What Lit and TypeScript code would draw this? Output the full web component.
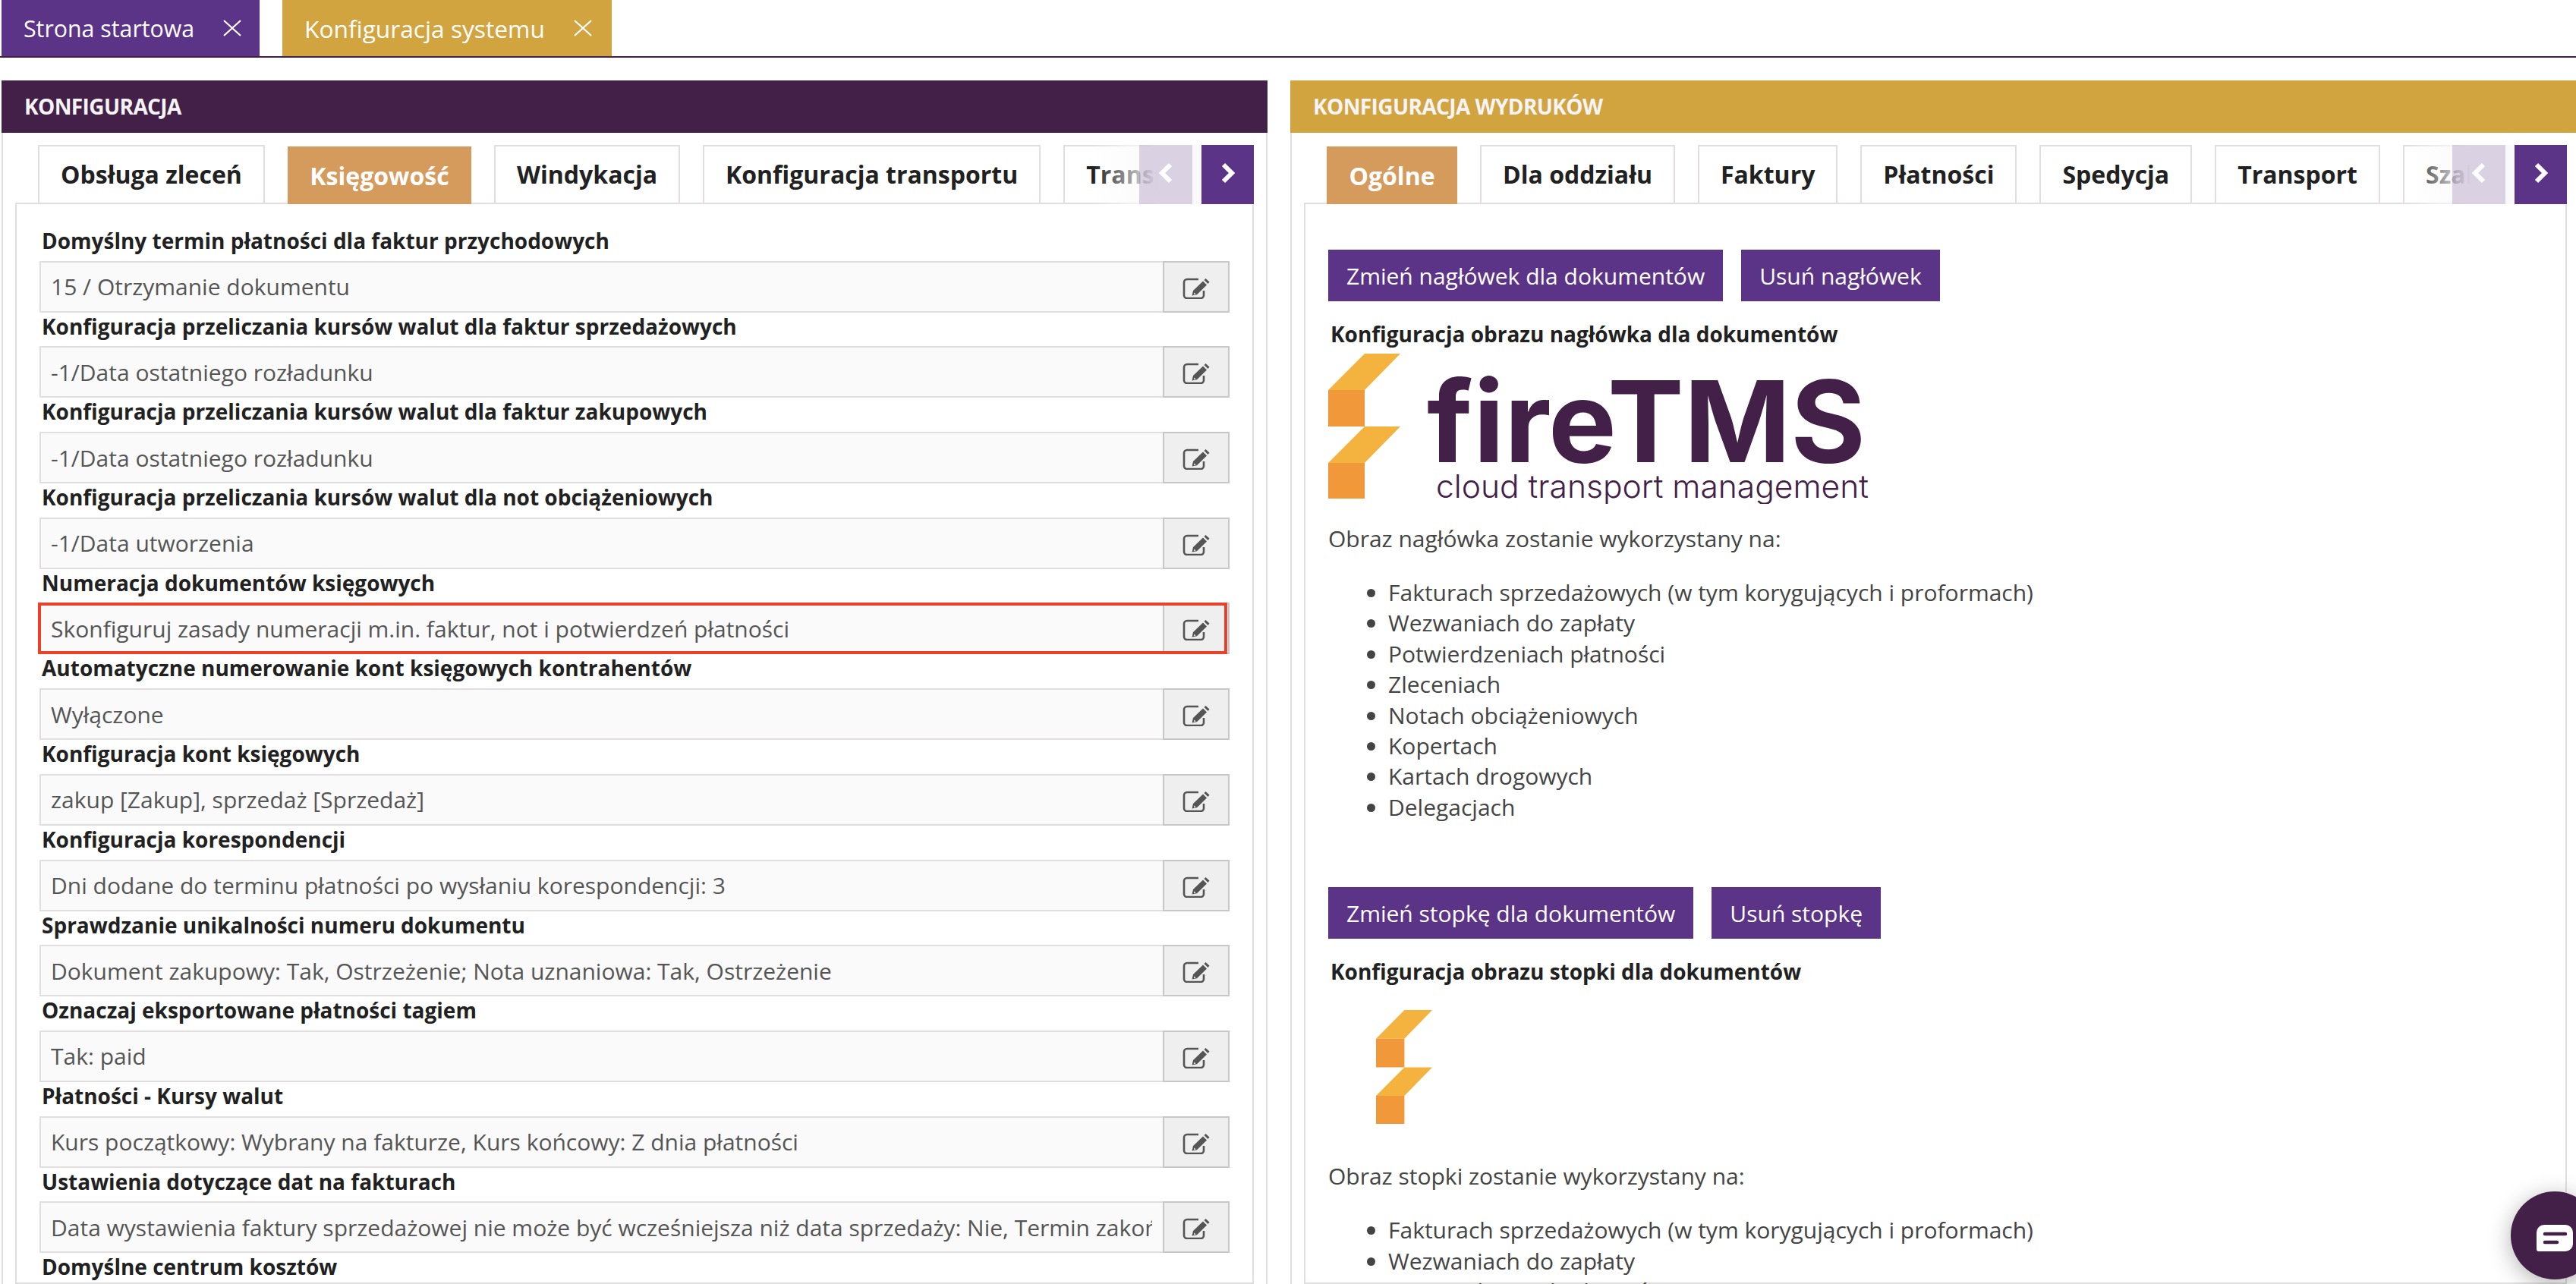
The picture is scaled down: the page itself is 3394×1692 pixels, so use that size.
import { LitElement, html, css, svg } from 'lit';
import { customElement } from 'lit/decorators.js';

const rows = [
  { label: 'Domyślny termin płatności dla faktur przychodowych', value: '15 / Otrzymanie dokumentu' },
  { label: 'Konfiguracja przeliczania kursów walut dla faktur sprzedażowych', value: '-1/Data ostatniego rozładunku' },
  { label: 'Konfiguracja przeliczania kursów walut dla faktur zakupowych', value: '-1/Data ostatniego rozładunku' },
  { label: 'Konfiguracja przeliczania kursów walut dla not obciążeniowych', value: '-1/Data utworzenia' },
  { label: 'Numeracja dokumentów księgowych', value: 'Skonfiguruj zasady numeracji m.in. faktur, not i potwierdzeń płatności', marked: true },
  { label: 'Automatyczne numerowanie kont księgowych kontrahentów', value: 'Wyłączone' },
  { label: 'Konfiguracja kont księgowych', value: 'zakup [Zakup], sprzedaż [Sprzedaż]' },
  { label: 'Konfiguracja korespondencji', value: 'Dni dodane do terminu płatności po wysłaniu korespondencji: 3' },
  { label: 'Sprawdzanie unikalności numeru dokumentu', value: 'Dokument zakupowy: Tak, Ostrzeżenie; Nota uznaniowa: Tak, Ostrzeżenie' },
  { label: 'Oznaczaj eksportowane płatności tagiem', value: 'Tak: paid' },
  { label: 'Płatności - Kursy walut', value: 'Kurs początkowy: Wybrany na fakturze, Kurs końcowy: Z dnia płatności' },
  { label: 'Ustawienia dotyczące dat na fakturach', value: 'Data wystawienia faktury sprzedażowej nie może być wcześniejsza niż data sprzedaży: Nie, Termin zakończenia usługi: Tak' },
  { label: 'Domyślne centrum kosztów', value: '' },
];

const headerUses = [
  'Fakturach sprzedażowych (w tym korygujących i proformach)',
  'Wezwaniach do zapłaty',
  'Potwierdzeniach płatności',
  'Zleceniach',
  'Notach obciążeniowych',
  'Kopertach',
  'Kartach drogowych',
  'Delegacjach',
];

const closeIcon = html`<svg class="close" viewBox="0 0 24 22"><path d="M1 1 23 21M23 1 1 21" fill="none" stroke="currentColor" stroke-width="2.2" /></svg>`;

const editIcon = html`<svg class="edit" viewBox="0 0 36 28">
  <path d="M21 2H6a4 4 0 0 0-4 4v17a4 4 0 0 0 4 4h18a4 4 0 0 0 4-4v-6" fill="none" stroke="#555" stroke-width="2.6" />
  <path d="M12.500 23.500 14 17 27 4.500 32 9.500 19 22.200Z" fill="#555" />
  <path d="M28.500 3 30.500 1 35.500 5.500 33.500 8Z" fill="#555" />
  <path d="M14.800 22.200 15.500 19.500 17.500 21.500Z" fill="#efefef" />
</svg>`;

// the orange mark of the logo, drawn in a 95x191 box
const mark = svg`
  <path d="M48 0H95L48 48H0Z M48 96H95L48 144H0Z" fill="#f4b33f" />
  <path d="M0 48H48V96H0Z M0 144H48V191H0Z" fill="#f1983b" />
`;

@customElement('app-root')
export class AppRoot extends LitElement {
  static styles = css`
    :host {
      display: block;
      position: relative;
      height: 1692px;
      overflow: hidden;
      background: #fff;
      font-family: 'Open Sans', sans-serif;
      color: #212121;
    }
    .top {
      display: flex;
      gap: 30px;
      height: 74px;
      padding-left: 2px;
      border-bottom: 2px solid #432047;
    }
    .top-tab {
      display: flex;
      align-items: center;
      gap: 38px;
      padding: 0 24px 0 29px;
      color: #fff;
      font-size: 30.300px;
    }
    .top-tab.gold { font-size: 31.700px; padding-right: 26px; }
    .purple { background: #5c3487; }
    .gold { background: #d1a43f; }
    .close { width: 24px; height: 22px; }

    .panels {
      display: flex;
      gap: 30px;
      padding: 30px 0 0 2px;
      height: 1586px;
    }
    .panel {
      display: flex;
      flex-direction: column;
      min-width: 0;
    }
    .left { width: 1668px; flex: none; }
    .right { flex: 1; }
    .head {
      height: 69px;
      line-height: 69px;
      padding-left: 30px;
      font-size: 28px;
      font-weight: 700;
      letter-spacing: -0.6px;
      color: #f6f4f6;
    }
    .dark { background: #432047; }
    .frame {
      flex: 1;
      display: flex;
      flex-direction: column;
      padding: 16px 16px 0 16px;
      border-left: 2px solid #e2dee0;
      min-height: 0;
    }
    .left .frame { border-right: 2px solid #e2dee0; }
    .right .frame { padding-right: 12px; }

    .strip {
      position: relative;
      z-index: 1;
      display: flex;
      gap: 30px;
      height: 78px;
      flex: none;
      padding-left: 30px;
      overflow: hidden;
    }
    .sub {
      flex: none;
      box-sizing: border-box;
      display: flex;
      align-items: center;
      height: 78px;
      padding: 0 28px 2px;
      background: #fff;
      border: 2px solid #e2dee0;
      font-size: 32px;
      font-weight: 700;
      white-space: nowrap;
    }
    .sub.on {
      height: 76px;
      margin-top: 2px;
      padding: 0 29.500px;
      border: 0;
      background: #d59b5d;
      color: #fff;
    }
    .fade {
      position: absolute;
      top: 0;
      right: 0;
      bottom: 0;
      width: 212px;
      background: linear-gradient(to right, rgba(250, 250, 250, 0), #fafafa 85px);
    }
    .nav {
      position: absolute;
      top: 0;
      right: 0;
      bottom: 0;
      display: flex;
      gap: 12px;
    }
    .nav div {
      width: 70px;
      display: flex;
      align-items: center;
      justify-content: center;
      padding-bottom: 4px;
      box-sizing: border-box;
    }
    .nav .prev { background: rgba(92, 52, 135, 0.2); }
    .nav .next { background: #5c3487; width: 69px; }
    .nav svg { width: 18px; height: 28px; }

    .pane {
      flex: 1;
      margin-top: -2px;
      border: 2px solid #e2dee0;
      min-height: 0;
    }
    .form { padding: 30px 30px 0; }
    .field-label {
      height: 44.700px;
      line-height: 36px;
      padding-left: 3px;
      font-size: 28px;
      font-weight: 700;
      white-space: nowrap;
    }
    .field {
      position: relative;
      display: flex;
      height: 68px;
      box-sizing: border-box;
    }
    .val {
      flex: 1;
      min-width: 0;
      box-sizing: border-box;
      display: flex;
      align-items: center;
      padding: 0 14px 0 13px;
      background: #fafafa;
      border: 2px solid #e2dee0;
      border-right: 0;
      font-size: 30px;
      color: #555;
    }
    .val span { overflow: hidden; white-space: nowrap; }
    .btn {
      flex: none;
      width: 88px;
      box-sizing: border-box;
      display: flex;
      align-items: center;
      justify-content: center;
      padding-top: 4px;
      background: #efefef;
      border: 2px solid #c8c6c6;
    }
    .edit { width: 36px; height: 28px; }
    .field.marked::after {
      content: '';
      position: absolute;
      top: 0;
      bottom: 0;
      left: -2px;
      right: 3px;
      border: 4px solid #e8432a;
    }

    .print { padding: 60px 30px 0; }
    .actions { display: flex; gap: 24px; }
    .action {
      display: flex;
      align-items: center;
      height: 68px;
      padding: 0 24px;
      background: #5c3487;
      color: #fff;
      font-size: 30px;
      white-space: nowrap;
    }
    .title {
      margin-top: 21px;
      padding-left: 3px;
      line-height: 44px;
      font-size: 28px;
      font-weight: 700;
    }
    .logo { display: block; margin-top: 2px; width: 720px; height: 200px; }
    .logo-small { display: block; margin: 29px 0 0 63px; width: 74px; height: 150px; }
    .logo-name { font-family: Inter, sans-serif; font-weight: 700; font-size: 149px; fill: #432047; }
    .logo-sub { font-family: Inter, sans-serif; font-weight: 300; font-size: 42px; fill: #432047; }
    p {
      margin: 26px 0 0;
      line-height: 40px;
      font-size: 30px;
      color: #444;
    }
    ul {
      margin: 31px 0 0;
      padding-left: 79px;
      font-size: 30px;
      line-height: 40.400px;
      color: #444;
    }
    .gap-top { margin-top: 85px; }
    .after-small { margin-top: 49px; }

    .chat {
      position: absolute;
      left: 3308px;
      top: 1570px;
      width: 116px;
      height: 116px;
      border-radius: 50%;
      background: #432047;
      box-shadow: 0 6px 30px rgba(0, 0, 0, 0.3);
    }
    .chat svg { position: absolute; left: 34px; top: 44px; width: 48px; height: 35px; }
  `;

  private subTabs(items: string[], active: string) {
    return html`<div class="strip">
      ${items.map((t) => html`<div class="sub ${t === active ? 'on' : ''}">${t}</div>`)}
      <div class="fade"></div>
      <div class="nav">
        <div class="prev">
          <svg viewBox="0 0 18 28"><path d="M15 3 4 14 15 25" fill="none" stroke="#fff" stroke-width="6" /></svg>
        </div>
        <div class="next">
          <svg viewBox="0 0 18 28"><path d="M3 3 14 14 3 25" fill="none" stroke="#fff" stroke-width="6" /></svg>
        </div>
      </div>
    </div>`;
  }

  render() {
    return html`
      <div class="top">
        <div class="top-tab purple">Strona startowa ${closeIcon}</div>
        <div class="top-tab gold">Konfiguracja systemu ${closeIcon}</div>
      </div>
      <div class="panels">
        <section class="panel left">
          <div class="head dark">KONFIGURACJA</div>
          <div class="frame">
            ${this.subTabs(['Obsługa zleceń', 'Księgowość', 'Windykacja', 'Konfiguracja transportu', 'Transport'], 'Księgowość')}
            <div class="pane form">
              ${rows.map(
                (r) => html`
                  <div class="field-label">${r.label}</div>
                  ${r.value
                    ? html`<div class="field ${r.marked ? 'marked' : ''}">
                        <div class="val"><span>${r.value}</span></div>
                        <div class="btn">${editIcon}</div>
                      </div>`
                    : ''}
                `,
              )}
            </div>
          </div>
        </section>
        <section class="panel right">
          <div class="head gold">KONFIGURACJA WYDRUKÓW</div>
          <div class="frame">
            ${this.subTabs(['Ogólne', 'Dla oddziału', 'Faktury', 'Płatności', 'Spedycja', 'Transport', 'Szablony'], 'Ogólne')}
            <div class="pane print">
              <div class="actions">
                <div class="action">Zmień nagłówek dla dokumentów</div>
                <div class="action">Usuń nagłówek</div>
              </div>
              <div class="title">Konfiguracja obrazu nagłówka dla dokumentów</div>
              <svg class="logo" viewBox="0 0 720 200">
                <g transform="translate(0 2)">${mark}</g>
                <text class="logo-name" x="130" y="145" textLength="578" lengthAdjust="spacingAndGlyphs">fireTMS</text>
                <text class="logo-sub" x="142" y="192" textLength="570" lengthAdjust="spacingAndGlyphs">cloud transport management</text>
              </svg>
              <p>Obraz nagłówka zostanie wykorzystany na:</p>
              <ul>${headerUses.map((u) => html`<li>${u}</li>`)}</ul>
              <div class="actions gap-top">
                <div class="action">Zmień stopkę dla dokumentów</div>
                <div class="action">Usuń stopkę</div>
              </div>
              <div class="title">Konfiguracja obrazu stopki dla dokumentów</div>
              <svg class="logo-small" viewBox="0 0 95 191" preserveAspectRatio="none">${mark}</svg>
              <p class="after-small">Obraz stopki zostanie wykorzystany na:</p>
              <ul>${headerUses.slice(0, 3).map((u) => html`<li>${u}</li>`)}</ul>
            </div>
          </div>
        </section>
      </div>
      <div class="chat">
        <svg viewBox="0 0 48 35">
          <path d="M10 0H38A10 10 0 0 1 48 10V25A10 10 0 0 1 38 35H3A3 3 0 0 1 0 32V10A10 10 0 0 1 10 0Z" fill="#fff" />
          <path d="M11 12H38M11 23H27" stroke="#432047" stroke-width="4.500" stroke-linecap="round" />
        </svg>
      </div>
    `;
  }
}
